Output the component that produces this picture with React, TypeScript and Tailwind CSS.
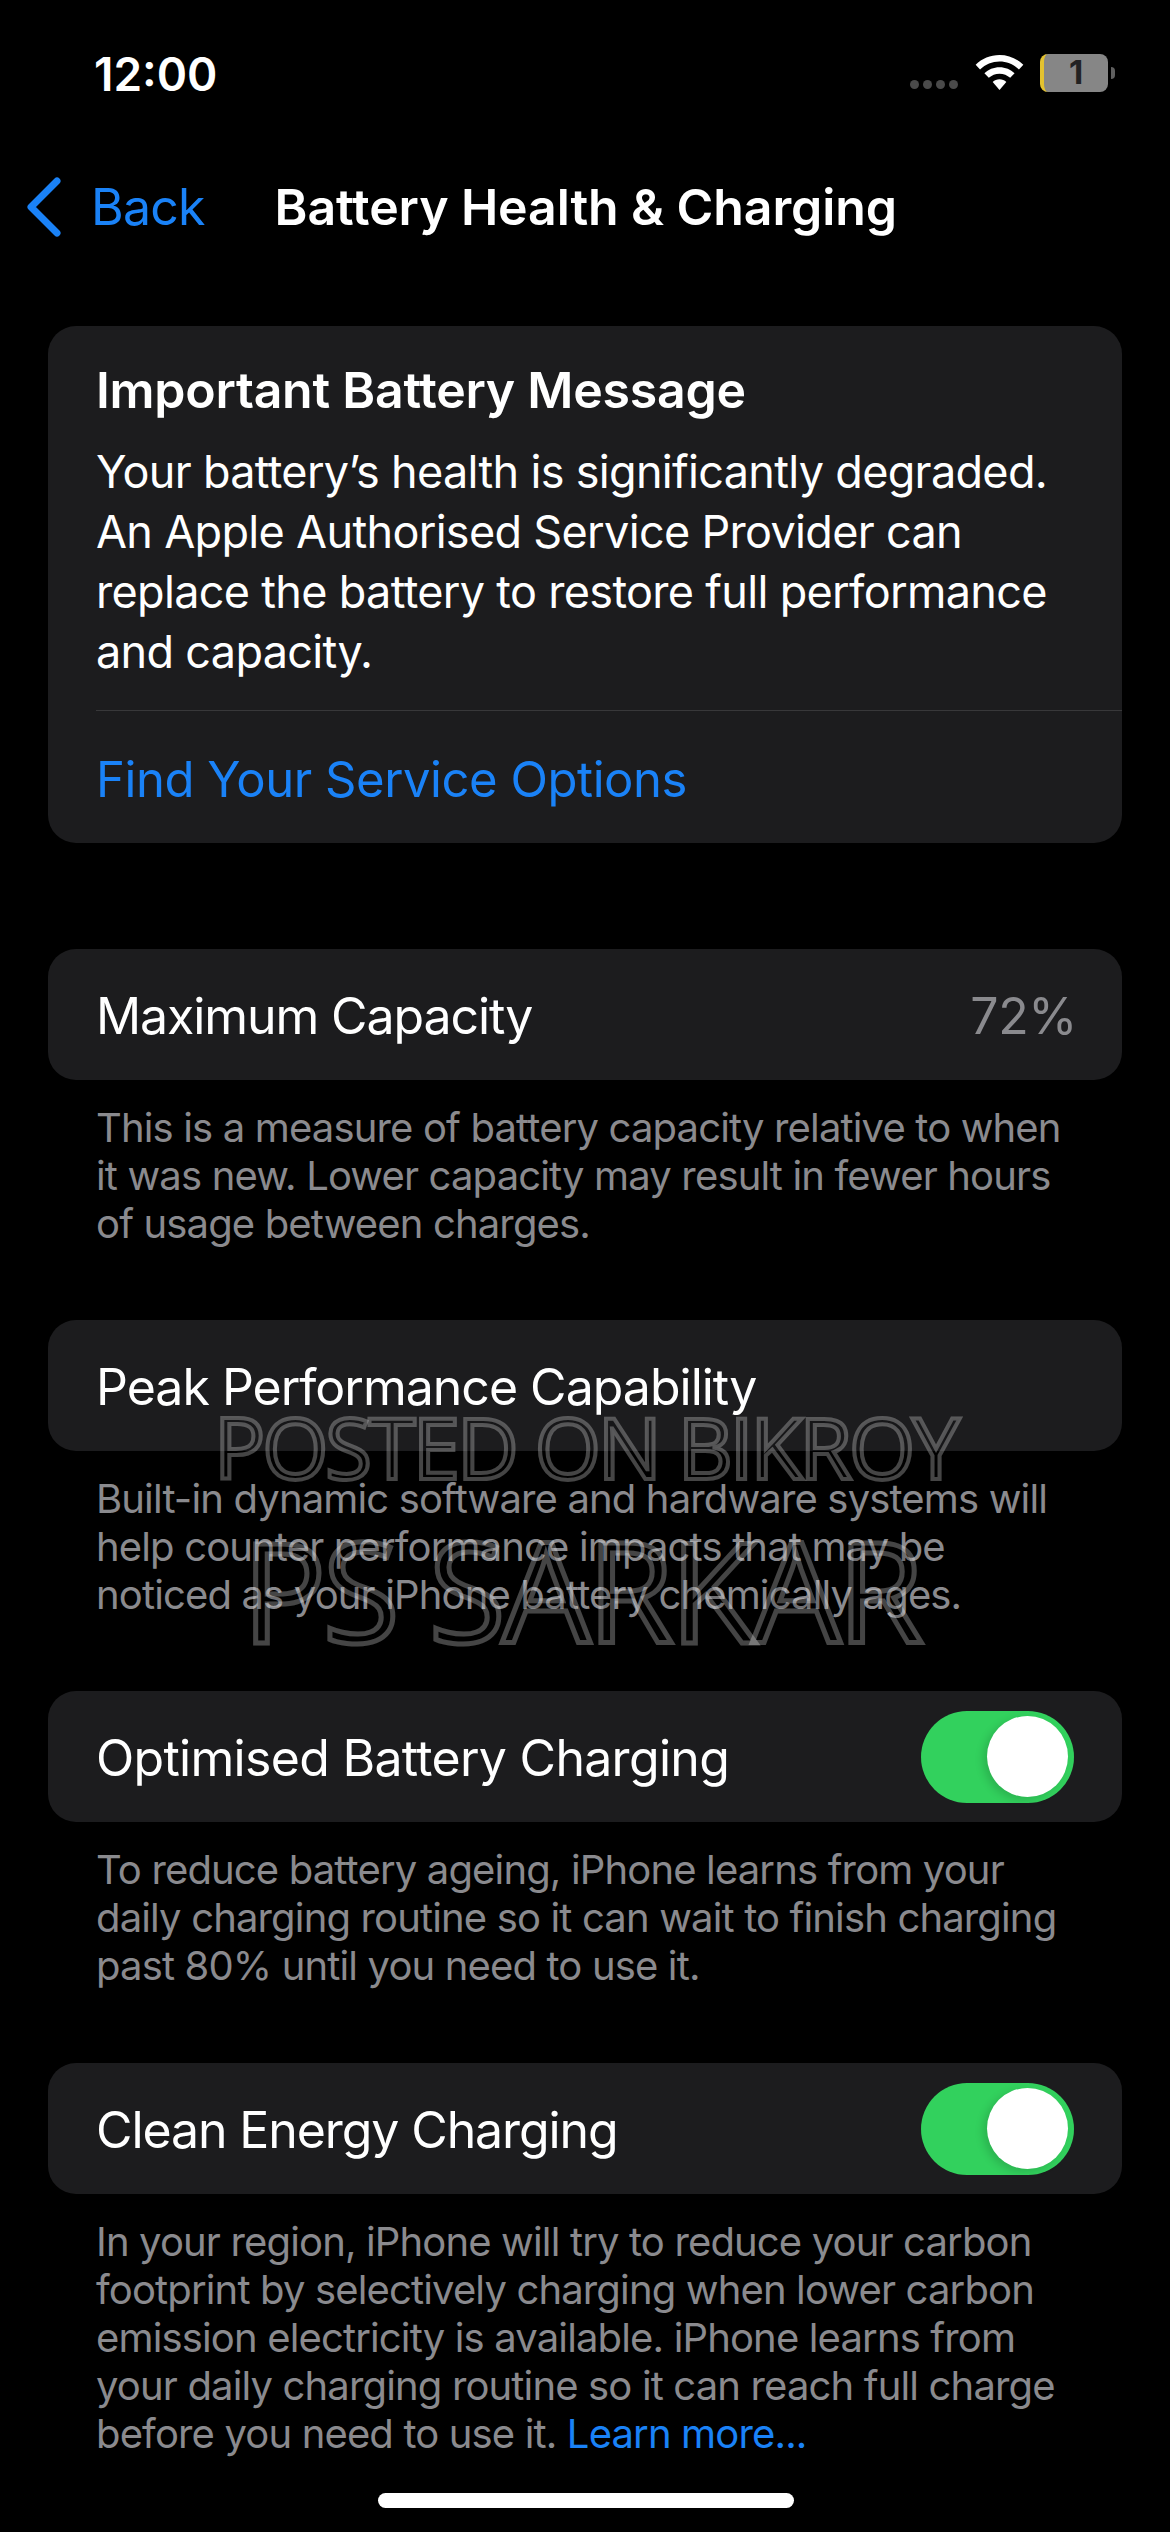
const font = "font-['Inter','Liberation_Sans',sans-serif]";

const Toggle = () => (
  <div className="w-[153px] h-[92px] rounded-full bg-[#32d15d] relative shrink-0">
    <div className="absolute right-[6px] top-[5px] w-[81px] h-[81px] rounded-full bg-white shadow-[-4px_3px_8px_rgba(0,0,0,0.15)]"></div>
  </div>
);

const Row = ({ label, value, toggle, track = 'tracking-[-1px]' }: { label: string; value?: string; toggle?: boolean; track?: string }) => (
  <div className="h-[131px] rounded-[28px] bg-[#1c1c1e] pl-[48px] pr-[48px] flex items-center justify-between">
    <span className={`text-[50px] pt-[3px] text-white ${track}`}>{label}</span>
    {value && <span className="text-[50px] pt-[3px] mr-[-3px] tracking-[-0.4px] text-[#8a8a8e]">{value}</span>}
    {toggle && <Toggle />}
  </div>
);

const Note = ({ children, mb }: { children: React.ReactNode; mb: string }) => (
  <p className={`pl-[48px] pt-[24px] text-[40px] leading-[48px] tracking-[-0.85px] text-[#8a8a8e] whitespace-pre ${mb}`}>
    {children}
  </p>
);

export default function App() {
  return (
    <div className={`${font} relative w-[1170px] h-[2532px] bg-black overflow-hidden`}>
      {/* status bar */}
      <div className="h-[146px] pl-[94px] pr-[55px] pt-[2px] flex items-center justify-between">
        <span className="text-[46px] font-semibold text-white">12:00</span>
        <div className="flex items-center mt-[-2px]">
          <div className="flex gap-[4px] mt-[22px] mr-[17px]">
            <div className="w-[9px] h-[9px] rounded-full bg-[#4a4a4a]"></div>
            <div className="w-[9px] h-[9px] rounded-full bg-[#4a4a4a]"></div>
            <div className="w-[9px] h-[9px] rounded-full bg-[#4a4a4a]"></div>
            <div className="w-[9px] h-[9px] rounded-full bg-[#4a4a4a]"></div>
          </div>
          <svg width="49" height="36" viewBox="0 0 50 37" className="mr-[16px]">
            <path d="M25 0C15.500 0 7 3.700 0.500 10L5 15C10.500 9.800 17.500 6.800 25 6.800S39.500 9.800 45 15L49.500 10C43 3.700 34.500 0 25 0Z" fill="#fff" />
            <path d="M25 12.500C19 12.500 13.500 14.800 9.500 18.800L14 23.500C17 20.800 20.800 19.200 25 19.200S33 20.800 36 23.500L40.500 18.800C36.500 14.800 31 12.500 25 12.500Z" fill="#fff" />
            <path d="M25 25C22.200 25 19.800 26 18 27.700L25 36L32 27.700C30.200 26 27.800 25 25 25Z" fill="#fff" />
          </svg>
          <div className="w-[68px] h-[38px] rounded-[8px] bg-[#868686] border-l-[4px] border-[#e3c22f] flex items-center justify-center text-[33px] font-bold text-[#222222]">
            1
          </div>
          <div className="w-[4px] h-[12px] rounded-r-full bg-[#5f5f5f] ml-[3px]"></div>
        </div>
      </div>

      {/* nav bar */}
      <div className="h-[122px] flex items-center">
        <svg width="36" height="60" viewBox="0 0 36 60" fill="none" className="ml-[26px]">
          <path d="M31 4L5 30L31 56" stroke="#1a82f7" strokeWidth="7" strokeLinecap="round" strokeLinejoin="round" />
        </svg>
        <span className="ml-[29px] text-[50px] tracking-[-0.8px] text-[#1a82f7]">Back</span>
        <span className="ml-[70px] text-[50px] font-semibold tracking-[-0.1px] text-white">Battery Health &amp; Charging</span>
      </div>

      <div className="pl-[48px] pr-[48px] pt-[58px]">
        {/* message card */}
        <div className="rounded-[28px] bg-[#1c1c1e] pl-[48px] h-[517px] mb-[106px]">
          <h2 className="pt-[32px] text-[50px] leading-[64px] font-semibold tracking-[-0.25px] text-white">Important Battery Message</h2>
          <p className="mt-[20px] text-[45px] leading-[60px] tracking-[-0.68px] text-white whitespace-pre">
            {"Your battery\u2019s health is significantly degraded.\nAn Apple Authorised Service Provider can\nreplace the battery to restore full performance\nand capacity."}
          </p>
          <div className="mt-[28px] h-px bg-[#38383a]"></div>
          <div className="h-[135px] pt-[2px] flex items-center text-[49px] tracking-[-0.45px] text-[#1a82f7]">Find Your Service Options</div>
        </div>

        <Row label="Maximum Capacity" value="72%" track="tracking-[-1.1px]" />
        <Note mb="mb-[72px]">
          {"This is a measure of battery capacity relative to when\nit was new. Lower capacity may result in fewer hours\nof usage between charges."}
        </Note>

        <Row label="Peak Performance Capability" />
        <Note mb="mb-[72px]">
          {"Built-in dynamic software and hardware systems will\nhelp counter performance impacts that may be\nnoticed as your iPhone battery chemically ages."}
        </Note>

        <Row label="Optimised Battery Charging" toggle track="tracking-[-0.7px]" />
        <Note mb="mb-[73px]">
          {"To reduce battery ageing, iPhone learns from your\ndaily charging routine so it can wait to finish charging\npast 80% until you need to use it."}
        </Note>

        <Row label="Clean Energy Charging" toggle track="tracking-[-1.1px]" />
        <Note mb="mb-0">
          {"In your region, iPhone will try to reduce your carbon\nfootprint by selectively charging when lower carbon\nemission electricity is available. iPhone learns from\nyour daily charging routine so it can reach full charge\nbefore you need to use it. "}
          <span className="text-[#1a82f7]">Learn more...</span>
        </Note>
      </div>

      {/* watermark */}
      <div className="absolute left-[214px] top-[1388px] font-['Open_Sans',sans-serif] text-[85px] leading-[116px] tracking-[-3px] text-black/20 whitespace-nowrap [-webkit-text-stroke:4px_rgba(255,255,255,0.27)]">
        POSTED ON BIKROY
      </div>
      <div className="absolute left-[242px] top-[1514px] font-['Open_Sans',sans-serif] text-[140px] leading-[150px] tracking-[-3.5px] text-black/20 whitespace-nowrap [-webkit-text-stroke:5px_rgba(255,255,255,0.27)]">
        PS SARKAR
      </div>

      {/* home indicator */}
      <div className="absolute left-[378px] top-[2493px] w-[416px] h-[15px] rounded-full bg-white"></div>
    </div>
  );
}
